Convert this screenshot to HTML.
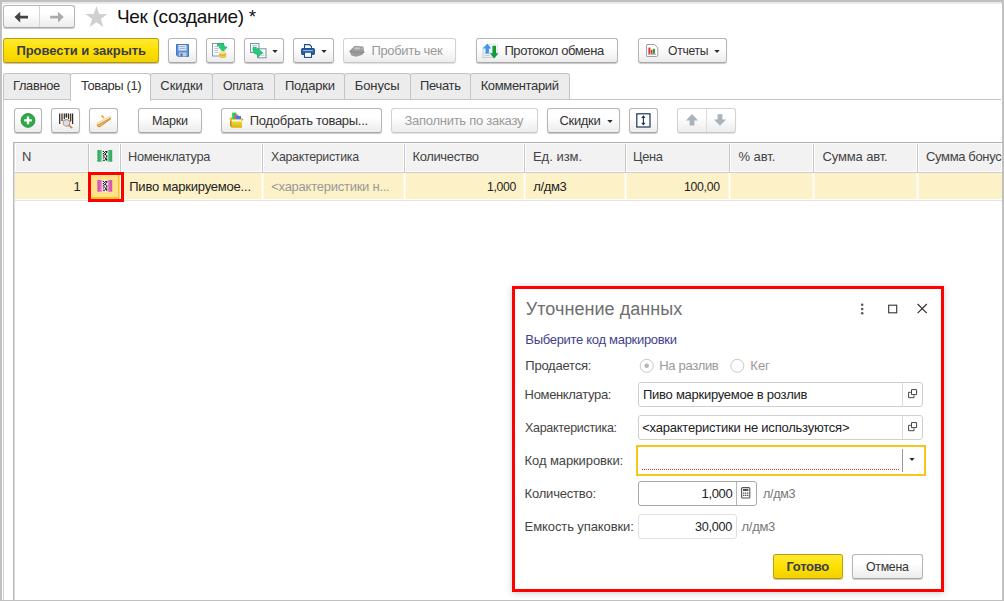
<!DOCTYPE html>
<html lang="ru"><head><meta charset="utf-8"><title>Чек (создание)</title>
<style>
*{box-sizing:border-box;margin:0;padding:0}
html,body{width:1004px;height:601px;overflow:hidden;background:#fff}
body{font-family:"Liberation Sans",sans-serif;font-size:13px;color:#222;position:relative;letter-spacing:-0.35px}
.abs{position:absolute}
svg{position:absolute;overflow:visible;z-index:4}
#frame{position:absolute;left:0;top:0;width:1004px;height:601px;border-style:solid;border-color:#c0c0c0;border-width:2px 2px 1px 2px;z-index:50;pointer-events:none}
.btn{position:absolute;border:1px solid #b6b6b6;border-bottom-color:#a8a8a8;border-radius:3px;background:linear-gradient(#ffffff 35%,#ececec);box-shadow:0 1px 1px rgba(0,0,0,.22);height:25px;line-height:23px;white-space:nowrap;color:#333}
.btn.dis{color:#9a9a9a;border-color:#d2d2d2;border-bottom-color:#c6c6c6;box-shadow:0 1px 1px rgba(0,0,0,.12)}
.ybtn{position:absolute;border:1px solid #c4a200;border-top-color:#b99a00;border-bottom-color:#b59600;border-radius:3px;background:linear-gradient(#ffe935,#fde000 50%,#f2d100);box-shadow:0 1px 1px rgba(0,0,0,.25);height:25px;line-height:23px;font-weight:bold;color:#3a3d4a;white-space:nowrap;text-align:center;letter-spacing:-0.1px}
.tab{position:absolute;top:73px;height:27px;border:1px solid #c4c4c4;border-bottom:none;background:#ececec;border-radius:3px 3px 0 0;line-height:24px;text-align:center;color:#333;white-space:nowrap}
.tab.act{background:#fff;height:28px;z-index:3}
.th{position:absolute;top:144px;height:28px;line-height:25px;background:#f2f2f2;color:#444;white-space:nowrap;overflow:hidden;border-left:1px solid #c6c6c6;padding-left:8px;box-shadow:inset 1px 0 0 #fff,inset -1px 0 0 #fff,inset 0 -1px 0 #fff}
.td{position:absolute;top:173px;height:26px;line-height:28px;background:#fdf1c7;color:#222;white-space:nowrap;overflow:hidden;border-left:1px solid #fff;padding-left:8px;box-shadow:inset 1px 0 0 rgba(255,255,255,.5),-1px 0 0 rgba(255,255,255,.4)}
.lbl{position:absolute;color:#444;white-space:nowrap;line-height:16px;letter-spacing:-0.1px}
.inp{letter-spacing:-0.2px;position:absolute;border:1px solid #cfcfcf;border-radius:3px;background:#fff;height:25px;line-height:23px;white-space:nowrap;overflow:hidden;color:#222}
.dd{position:absolute;width:0;height:0;border-left:2.5px solid transparent;border-right:2.5px solid transparent;border-top:3px solid #333}
</style></head><body>
<div id="frame"></div>
<div class="abs" style="left:2px;top:2px;width:1000px;height:2px;background:linear-gradient(#e6e6e6,#ececec)"></div>

<!-- nav buttons -->
<div class="btn" style="left:3px;top:5px;width:72px;height:23px"></div>
<div class="abs" style="left:39px;top:6px;width:1px;height:21px;background:#d4d4d4"></div>
<svg style="left:13px;top:10px" width="16" height="14" viewBox="0 0 16 14"><path d="M1.500 7.100 L7.200 1.700 V5.700 H15 V8.500 H7.200 V12.500 Z" fill="#444"/></svg>
<svg style="left:49px;top:10px" width="16" height="14" viewBox="0 0 16 14"><path d="M14.700 7.100 L9 1.700 V5.700 H1.200 V8.500 H9 V12.500 Z" fill="#aaaaaa"/></svg>
<svg style="left:0;top:0" width="120" height="32" viewBox="0 0 120 32"><path d="M96.5 6.1 L99.2 13.9 L107.5 14.1 L100.9 19.1 L103.3 27.1 L96.5 22.3 L89.7 27.1 L92.1 19.1 L85.5 14.1 L93.8 13.9 Z" fill="#d0d0d0"/></svg>
<div class="abs" style="left:116px;top:5px;font-size:19px;line-height:24px;color:#111;white-space:nowrap;letter-spacing:0"><span id="t1" style="letter-spacing:-0.31px;position:relative;left:1.0px">Чек (создание) *</span></div>

<!-- main toolbar -->
<div class="ybtn" style="left:3px;top:38px;width:156px;height:25px"><span id="t2" style="letter-spacing:-0.04px;position:relative;left:0.2px">Провести и закрыть</span></div>
<div class="btn" style="left:168px;top:38px;width:29px;height:25px"></div>
<div class="btn" style="left:206px;top:38px;width:29px;height:25px"></div>
<div class="btn" style="left:244px;top:38px;width:40px;height:25px"></div>
<div class="btn" style="left:293px;top:38px;width:41px;height:25px"></div>
<div class="btn dis" style="left:343px;top:38px;width:113px;height:25px;padding-left:28px"><span id="t3" style="letter-spacing:-0.33px;position:relative;left:-0.6px">Пробить чек</span></div>
<div class="btn" style="left:476px;top:38px;width:142px;height:25px;padding-left:28px"><span id="t4" style="letter-spacing:-0.41px;position:relative;left:-0.6px">Протокол обмена</span></div>
<div class="btn" style="left:638px;top:38px;width:89px;height:25px;padding-left:28px"><span id="t5" style="letter-spacing:-0.30px;position:relative;left:0.5px;display:inline-block;transform:scaleX(0.931);transform-origin:0 50%">Отчеты</span></div>
<svg style="left:272px;top:50px" width="6" height="3" viewBox="0 0 6 3"><path d="M0.300 0 H5.700 L3 3.100 Z" fill="#2b2b2b"/></svg>
<svg style="left:321px;top:50px" width="6" height="3" viewBox="0 0 6 3"><path d="M0.300 0 H5.700 L3 3.100 Z" fill="#2b2b2b"/></svg>
<svg style="left:714px;top:50px" width="6" height="3" viewBox="0 0 6 3"><path d="M0.300 0 H5.700 L3 3.100 Z" fill="#2b2b2b"/></svg>

<!-- toolbar icons -->
<svg style="left:176px;top:44px" width="13" height="13" viewBox="0 0 13 13"><path d="M0.5 0.5 H12.5 V12.5 H2 L0.5 11 Z" fill="#5f93dc" stroke="#4376bf"/><rect x="2.5" y="1" width="8" height="5.5" fill="#dfe8f5"/><path d="M3.5 2.5H9.5M3.5 4.5H9.5" stroke="#9db4d6" stroke-width="1"/><rect x="3" y="8.5" width="7.5" height="4" fill="#c5ccd6"/><rect x="4.5" y="9.5" width="2" height="3" fill="#3f6db0"/></svg>
<svg style="left:212px;top:43px" width="16" height="16" viewBox="0 0 16 16"><rect x="0.5" y="0.5" width="11" height="12.5" fill="#fbfcfe" stroke="#8395b0"/><path d="M2.5 3.5H6M2.5 5.5H6.5M2.5 7.5H6M2.5 9.5H6" stroke="#b8c2d2"/><path d="M5.5 0.5 H9.5 Q12.5 0.5 12.5 4 H15 L11 8.8 L7 4 H9.6 Q9.6 3 8.5 3 H5.5 Z" fill="#22d07a" stroke="#17a85e" stroke-width=".7"/><path d="M7.3 9.5 V13.5 Q7.3 15 10.7 15 Q14.1 15 14.1 13.5 V9.5 Z" fill="#e9c84a"/><ellipse cx="10.7" cy="9.5" rx="3.4" ry="1.4" fill="#f7e391"/><path d="M7.3 11.5 Q10.7 13.2 14.1 11.5" stroke="#c9a52d" fill="none" stroke-width=".8"/></svg>
<svg style="left:250px;top:43px" width="17" height="16" viewBox="0 0 17 16"><rect x="0.5" y="0.5" width="8.5" height="9" fill="#fbfcfe" stroke="#7f8fa8"/><path d="M2.5 2.5H7" stroke="#b8c2d2"/><rect x="7.5" y="5.8" width="8.5" height="9" fill="#fbfcfe" stroke="#7f8fa8"/><path d="M11 10.5H14.5M11 12.5H14.5" stroke="#c8d0dc"/><path d="M3 4.2 H6.3 V7.2 L8.2 5.5 L12.6 9.8 L8.2 14 V11.2 Q3 11.2 3 7 Z" fill="#22d07a" stroke="#17a85e" stroke-width=".7"/></svg>
<svg style="left:301px;top:44px" width="14" height="14" viewBox="0 0 14 14"><path d="M3.5 4.5 V0.6 H8.5 L10.5 2.6 V4.5" fill="#fff" stroke="#1f4f8f" stroke-width="1.1"/><rect x="0.6" y="4.6" width="12.8" height="5.8" rx="1.2" fill="#2d62a8" stroke="#1f4f8f" stroke-width="1.1"/><rect x="2.2" y="6" width="9.6" height="1.2" fill="#8fb3e3"/><rect x="3.5" y="8.2" width="7" height="5.2" fill="#fff" stroke="#1f4f8f" stroke-width="1.1"/></svg>
<svg style="left:349px;top:45px" width="16" height="12" viewBox="0 0 16 12"><path d="M0.4 6.2 L5.6 0.8 L14.4 1.4 L15.3 7.4 L13 10 L7 11.7 L2.4 10.6 Z" fill="#9c9c9c"/><path d="M5.8 2.2 L11 2.4 L10.6 4.4 L5 4.2 Z" fill="#c9c9c9"/><path d="M11.8 2.6 L13.6 2.8 L13.6 4.6 L11.6 4.4 Z" fill="#b5b5b5"/><path d="M0.4 6.2 L7.2 7.6 L15.3 7.4" stroke="#868686" fill="none" stroke-width=".8"/></svg>
<svg style="left:482px;top:43px" width="17" height="16" viewBox="0 0 17 16"><rect x="1" y="4" width="10" height="10.5" fill="#eef1f6" stroke="#c5ccd8"/><path d="M2.5 10.5H8M2.5 12.5H8" stroke="#c5ccd8"/><rect x="7" y="1" width="8.5" height="9" fill="#f6f7fa" stroke="#d2d7df" stroke-dasharray="1 1"/><path d="M5.2 0.5 L9.3 5.6 H6.9 V10.5 H3.5 V5.6 H1.1 Z" fill="#3f97ee"/><path d="M12.2 15.6 L16.5 10.2 H14 V2.8 H10.4 V10.2 H7.9 Z" fill="#149a3b"/></svg>
<svg style="left:646px;top:44px" width="13" height="13" viewBox="0 0 13 13"><path d="M1 0.5 H8.5 L11.8 3.8 V11 Q11.8 12.5 10.3 12.5 H1 Q0.6 12.5 0.6 12 V1 Q0.6 0.5 1 0.5 Z" fill="#fff" stroke="#8a95a3" stroke-width=".9"/><rect x="2.4" y="3.6" width="2" height="6.2" fill="#e4322b"/><rect x="4.8" y="5.8" width="1.8" height="4" fill="#e4322b"/><rect x="7" y="4.8" width="2" height="5" fill="#27a33a"/><path d="M2 10.2H10" stroke="#777" stroke-width=".7"/></svg>

<!-- sub toolbar icons -->
<svg style="left:20px;top:113px" width="16" height="16" viewBox="0 0 16 16"><circle cx="8" cy="7.4" r="7" fill="#2fa84a" stroke="#2b9443" stroke-width=".8"/><path d="M8 3.6V11.2M4.2 7.4H11.8" stroke="#fff" stroke-width="2.3"/></svg>
<svg style="left:58px;top:113px" width="17" height="17" viewBox="0 0 17 17"><path d="M1.700 0.400V11M4 0.400V8M6.300 0.400V6M10.600 0.400V6M12.700 0.400V8.500M14.600 0.400V11" stroke="#2b2b2b" stroke-width="1.200"/><path d="M8.400 0.400V4.600" stroke="#2b2b2b" stroke-width="1.700"/><circle cx="8.500" cy="9.900" r="3.300" fill="#cfe0f7" stroke="#c9976b" stroke-width="1.100"/><path d="M11 12.300 L13.600 14.600" stroke="#c08a5c" stroke-width="1.800" stroke-linecap="round"/></svg>
<svg style="left:96px;top:113px" width="16" height="16" viewBox="0 0 16 16"><path d="M5.600 2.300 L8 4.800" stroke="#f0a63c" stroke-width="1.700"/><path d="M1 10 L13.200 3.300 Q15.400 3 15 5.600 L4.200 13.600 Q1.600 14.400 1 12.600 Z" fill="#ecb45c"/><path d="M1.200 10.400 L13.300 3.700 Q14.600 3.600 14.700 4.600 L2.200 11.800 Z" fill="#fdf1d8"/><path d="M1.400 12.200 L14.800 5" stroke="#d18f2e" stroke-width=".9"/><path d="M1.100 12.700 Q1.800 14.200 4.200 13.600 L15 5.700" stroke="#c07d1c" stroke-width=".8" fill="none"/></svg>
<svg style="left:229px;top:112px" width="15" height="17" viewBox="0 0 15 17"><defs><linearGradient id="bx" x1="0" y1="0" x2="0" y2="1"><stop offset="0" stop-color="#f3d936"/><stop offset="1" stop-color="#d9b414"/></linearGradient></defs><rect x="3.200" y="0.600" width="4.200" height="7.400" fill="#10d64a"/><rect x="5.400" y="2.600" width="4" height="5.400" fill="#f5557a"/><rect x="7.200" y="4" width="4.800" height="4" fill="#3b7bf0"/><path d="M0.300 6.800 L2.600 4.800 L3.200 7.400 H12 L12.600 5.600 L14.600 7.600 L12.800 9.200 V15.600 H2.400 L1.200 13.800 V8.200 Z" fill="#e3bd18"/><path d="M2.400 9 H12.800 V15.600 H2.400 Z" fill="url(#bx)"/><path d="M3.200 7.500 H12 L12.800 9.400 H2.400 Z" fill="#fdf7d4"/><path d="M1.200 8.200 L2.400 9 V15.600 L1.200 13.800 Z" fill="#b88a10"/></svg>
<svg style="left:636px;top:113px" width="15" height="15" viewBox="0 0 15 15"><rect x="0.8" y="0.8" width="13.2" height="13.2" fill="#fff" stroke="#1c3557" stroke-width="1.200"/><path d="M7.4 3.4V11.4" stroke="#1c3557" stroke-width="1.1"/><path d="M7.4 2.2 L9.6 5 H5.2 Z M7.4 12.6 L9.6 9.8 H5.2 Z" fill="#1c3557"/></svg>
<svg style="left:685px;top:113px" width="14" height="14" viewBox="0 0 14 14"><path d="M7 1 L13 7.4 H9.4 V12.6 H4.6 V7.4 H1 Z" fill="#aab3b9"/></svg>
<svg style="left:713px;top:113px" width="14" height="14" viewBox="0 0 14 14"><path d="M7 12.8 L13 6.4 H9.4 V1.2 H4.6 V6.4 H1 Z" fill="#aab3b9"/></svg>

<!-- stamps -->
<svg style="left:97px;top:150px;z-index:4" width="16" height="12" viewBox="0 0 16 12"><defs><linearGradient id="g1" x1="0" x2="1"><stop offset="0" stop-color="#2ea45f"/><stop offset=".2" stop-color="#3fb572"/><stop offset=".36" stop-color="#bfe8d1"/><stop offset=".64" stop-color="#bfe8d1"/><stop offset=".8" stop-color="#3fb572"/><stop offset="1" stop-color="#2ea45f"/></linearGradient></defs><path d="M0.8 0 H14.799999999999999 L15.6 0.98 L14.799999999999999 1.97 L15.6 2.95 L14.799999999999999 3.93 L15.6 4.92 L14.799999999999999 5.90 L15.6 6.88 L14.799999999999999 7.87 L15.6 8.85 L14.799999999999999 9.83 L15.6 10.82 L14.799999999999999 11.80 H0.8 L0 10.82 L0.8 9.83 L0 8.85 L0.8 7.87 L0 6.88 L0.8 5.90 L0 4.92 L0.8 3.93 L0 2.95 L0.8 1.97 L0 0.98 L0.8 0.00 Z" fill="url(#g1)"/><rect x="5.600" y="0.400" width="5" height="11" fill="#fff"/><path d="M5.90 0.90h1.1v1.1h-1.1zM8.10 0.90h1.1v1.1h-1.1zM9.20 0.90h1.1v1.1h-1.1zM7.00 2.00h1.1v1.1h-1.1zM9.20 2.00h1.1v1.1h-1.1zM5.90 3.10h1.1v1.1h-1.1zM8.10 3.10h1.1v1.1h-1.1zM7.00 4.20h1.1v1.1h-1.1zM8.10 4.20h1.1v1.1h-1.1zM5.90 5.30h1.1v1.1h-1.1zM9.20 5.30h1.1v1.1h-1.1zM7.00 6.40h1.1v1.1h-1.1zM9.20 6.40h1.1v1.1h-1.1zM5.90 7.50h1.1v1.1h-1.1zM8.10 7.50h1.1v1.1h-1.1zM8.10 8.60h1.1v1.1h-1.1zM9.20 8.60h1.1v1.1h-1.1zM5.90 9.70h1.1v1.1h-1.1zM7.00 9.70h1.1v1.1h-1.1zM9.20 9.70h1.1v1.1h-1.1z" fill="#111"/></svg>
<svg style="left:97px;top:180px;z-index:4" width="16" height="12" viewBox="0 0 16 12"><defs><linearGradient id="g2" x1="0" x2="1"><stop offset="0" stop-color="#d548ae"/><stop offset=".2" stop-color="#dc62ba"/><stop offset=".36" stop-color="#f1bfe3"/><stop offset=".64" stop-color="#f1bfe3"/><stop offset=".8" stop-color="#dc62ba"/><stop offset="1" stop-color="#d548ae"/></linearGradient></defs><path d="M0.8 0 H14.799999999999999 L15.6 0.98 L14.799999999999999 1.97 L15.6 2.95 L14.799999999999999 3.93 L15.6 4.92 L14.799999999999999 5.90 L15.6 6.88 L14.799999999999999 7.87 L15.6 8.85 L14.799999999999999 9.83 L15.6 10.82 L14.799999999999999 11.80 H0.8 L0 10.82 L0.8 9.83 L0 8.85 L0.8 7.87 L0 6.88 L0.8 5.90 L0 4.92 L0.8 3.93 L0 2.95 L0.8 1.97 L0 0.98 L0.8 0.00 Z" fill="url(#g2)"/><rect x="5.600" y="0.400" width="5" height="11" fill="#fff"/><path d="M5.90 0.90h1.1v1.1h-1.1zM8.10 0.90h1.1v1.1h-1.1zM9.20 0.90h1.1v1.1h-1.1zM7.00 2.00h1.1v1.1h-1.1zM9.20 2.00h1.1v1.1h-1.1zM5.90 3.10h1.1v1.1h-1.1zM8.10 3.10h1.1v1.1h-1.1zM7.00 4.20h1.1v1.1h-1.1zM8.10 4.20h1.1v1.1h-1.1zM5.90 5.30h1.1v1.1h-1.1zM9.20 5.30h1.1v1.1h-1.1zM7.00 6.40h1.1v1.1h-1.1zM9.20 6.40h1.1v1.1h-1.1zM5.90 7.50h1.1v1.1h-1.1zM8.10 7.50h1.1v1.1h-1.1zM8.10 8.60h1.1v1.1h-1.1zM9.20 8.60h1.1v1.1h-1.1zM5.90 9.70h1.1v1.1h-1.1zM7.00 9.70h1.1v1.1h-1.1zM9.20 9.70h1.1v1.1h-1.1z" fill="#111"/></svg>

<!-- tabs -->
<div class="abs" style="left:3px;top:99px;width:998px;height:1px;background:#c4c4c4;z-index:2"></div>
<div class="abs" style="left:3px;top:99px;width:1px;height:502px;background:#d0d0d0"></div>
<div class="tab" style="left:3px;width:68px"><span id="t6" style="letter-spacing:-0.30px;position:relative;left:-0.4px;display:inline-block;transform:scaleX(0.984);transform-origin:0 50%">Главное</span></div>
<div class="tab act" style="left:70px;width:81px"><span id="t7" style="letter-spacing:-0.40px;position:relative;left:0.6px">Товары (1)</span></div>
<div class="tab" style="left:150px;width:63px"><span id="t8" style="letter-spacing:-0.10px;position:relative;left:0.0px">Скидки</span></div>
<div class="tab" style="left:212px;width:63px"><span id="t9" style="letter-spacing:-0.30px;position:relative;left:1.4px;display:inline-block;transform:scaleX(0.941);transform-origin:0 50%">Оплата</span></div>
<div class="tab" style="left:274px;width:71px"><span id="t10" style="letter-spacing:-0.20px;position:relative;left:0.4px">Подарки</span></div>
<div class="tab" style="left:344px;width:67px"><span id="t11" style="letter-spacing:-0.04px;position:relative;left:-0.4px">Бонусы</span></div>
<div class="tab" style="left:410px;width:61px"><span id="t12" style="letter-spacing:-0.30px;position:relative;left:-0.5px;display:inline-block;transform:scaleX(0.995);transform-origin:0 50%">Печать</span></div>
<div class="tab" style="left:470px;width:100px"><span id="t13" style="letter-spacing:-0.36px;position:relative;left:-0.4px">Комментарий</span></div>

<!-- sub toolbar -->
<div class="btn" style="left:14px;top:108px;width:28px;height:25px"></div>
<div class="btn" style="left:51px;top:108px;width:29px;height:25px"></div>
<div class="btn" style="left:89px;top:108px;width:29px;height:25px"></div>
<div class="btn" style="left:138px;top:108px;width:64px;height:25px;text-align:center"><span id="t14" style="letter-spacing:-0.30px;position:relative;left:0.2px;display:inline-block;transform:scaleX(0.966);transform-origin:0 50%">Марки</span></div>
<div class="btn" style="left:221px;top:108px;width:161px;height:25px;padding-left:29px"><span id="t15" style="letter-spacing:-0.29px;position:relative;left:-1.2px">Подобрать товары...</span></div>
<div class="btn dis" style="left:391px;top:108px;width:147px;height:25px;text-align:center"><span id="t16" style="letter-spacing:-0.27px;position:relative;left:-0.7px">Заполнить по заказу</span></div>
<div class="btn" style="left:547px;top:108px;width:73px;height:25px;padding-left:13px"><span id="t17" style="letter-spacing:-0.34px;position:relative;left:-1.5px">Скидки</span></div>
<svg style="left:607px;top:120px" width="6" height="3" viewBox="0 0 6 3"><path d="M0.300 0 H5.700 L3 3.100 Z" fill="#2b2b2b"/></svg>
<div class="btn" style="left:629px;top:108px;width:29px;height:25px"></div>
<div class="btn dis" style="left:677px;top:108px;width:59px;height:25px"></div>
<div class="abs" style="left:706px;top:109px;width:1px;height:23px;background:#dcdcdc"></div>

<!-- table -->
<div class="abs" style="left:13px;top:142px;width:990px;height:461px;border-top:1px solid #b2b2b2;border-left:1px solid #bcbcbc;background:#fff"></div>
<div class="abs" style="left:14px;top:143px;width:1px;height:460px;background:#dcdcdc"></div>
<div class="abs" style="left:15px;top:143px;width:987px;height:1px;background:#fbfbfb"></div>
<div class="abs" style="left:16px;top:144px;width:986px;height:27px;background:#f2f2f2"></div>
<div class="abs" style="left:15px;top:172px;width:987px;height:1px;background:#cdcdcd"></div>
<div class="abs" style="left:15px;top:173px;width:987px;height:26px;background:#fdf1c7"></div>
<div class="abs" style="left:15px;top:200px;width:987px;height:1px;background:#e4e4e4"></div>

<div class="th" style="left:15px;width:74px;border-left:none"><span id="t18" style="letter-spacing:-0.35px;position:relative;left:-1.1px">N</span></div>
<div class="th" style="left:88px;width:32px"></div>
<div class="th" style="left:120px;width:142px"><span id="t19" style="letter-spacing:-0.30px;position:relative;left:-0.6px;display:inline-block;transform:scaleX(0.982);transform-origin:0 50%">Номенклатура</span></div>
<div class="th" style="left:262px;width:142px"><span id="t20" style="letter-spacing:-0.30px;position:relative;left:0.1px;display:inline-block;transform:scaleX(0.950);transform-origin:0 50%">Характеристика</span></div>
<div class="th" style="left:404px;width:120px"><span id="t21" style="letter-spacing:-0.35px;position:relative;left:-0.6px">Количество</span></div>
<div class="th" style="left:524px;width:102px"><span id="t22" style="letter-spacing:0.00px;position:relative;left:-0.1px">Ед. изм.</span></div>
<div class="th" style="left:625px;width:105px"><span id="t23" style="letter-spacing:-0.30px;position:relative;left:-0.9px;display:inline-block;transform:scaleX(0.989);transform-origin:0 50%">Цена</span></div>
<div class="th" style="left:729px;width:84px"><span id="t24" style="letter-spacing:-0.10px;position:relative;left:0.6px">% авт.</span></div>
<div class="th" style="left:813px;width:104px"><span id="t25" style="letter-spacing:-0.15px;position:relative;left:0.6px">Сумма авт.</span></div>
<div class="th" style="left:917px;width:85px"><span id="t26">Сумма бонусов</span></div>

<div class="td" style="left:15px;width:74px;border-left:none;box-shadow:none;text-align:right;padding-right:8px"><span id="t27" style="letter-spacing:-0.35px;position:relative;left:-0.5px">1</span></div>
<div class="td" style="left:88px;width:32px;background:#ffe28a;border:2px solid #f6c61e;border-left:1px solid #fff"></div>
<div class="td" style="left:120px;width:142px"><span id="t28" style="letter-spacing:-0.20px;position:relative;left:0.2px">Пиво маркируемое...</span></div>
<div class="td" style="left:262px;width:142px;color:#999"><span id="t29" style="letter-spacing:-0.25px;position:relative;left:0.2px">&lt;характеристики н...</span></div>
<div class="td" style="left:404px;width:120px;text-align:right;padding-right:8px"><span id="t30" style="letter-spacing:-0.30px;position:relative;left:2.3px;display:inline-block;transform:scaleX(0.937);transform-origin:0 50%">1,000</span></div>
<div class="td" style="left:524px;width:102px"><span id="t31" style="letter-spacing:-0.39px;position:relative;left:0.3px">л/дм3</span></div>
<div class="td" style="left:625px;width:105px;text-align:right;padding-right:8px"><span id="t32" style="letter-spacing:-0.30px;position:relative;left:0.3px;display:inline-block;transform:scaleX(0.942);transform-origin:0 50%">100,00</span></div>
<div class="td" style="left:729px;width:84px"></div>
<div class="td" style="left:813px;width:104px"></div>
<div class="td" style="left:917px;width:85px"></div>
<div class="abs" style="left:88px;top:172px;width:36px;height:30px;border:3px solid #ff0000;z-index:5"></div>

<!-- dialog -->
<div class="abs" style="left:512px;top:286px;width:432px;height:306px;background:#fff;box-shadow:0 1px 7px rgba(0,0,0,.2)"></div>
<div class="abs" style="left:512px;top:286px;width:432px;height:306px;border:3px solid #ff0000;z-index:6"></div>
<div class="abs" style="left:525px;top:298px;font-size:18px;line-height:22px;color:#6e6e6e;white-space:nowrap;letter-spacing:0"><span id="t33" style="letter-spacing:0.05px;position:relative;left:0.8px">Уточнение данных</span></div>
<div class="lbl" style="left:525px;top:332px;color:#3f3f8f"><span id="t34" style="letter-spacing:-0.30px;position:relative;left:0.3px">Выберите код маркировки</span></div>
<div class="lbl" style="left:525px;top:358px"><span id="t35" style="letter-spacing:-0.23px;position:relative;left:0.3px">Продается:</span></div>
<div class="lbl" style="left:660px;top:358px;color:#999"><span id="t36" style="letter-spacing:-0.32px;position:relative;left:-0.8px">На разлив</span></div>
<div class="lbl" style="left:750px;top:358px;color:#999"><span id="t37" style="letter-spacing:0.01px;position:relative;left:0.3px">Кег</span></div>
<div class="lbl" style="left:525px;top:387px"><span id="t38" style="letter-spacing:-0.34px;position:relative;left:-0.4px">Номенклатура:</span></div>
<div class="lbl" style="left:525px;top:420px"><span id="t39" style="letter-spacing:-0.30px;position:relative;left:0.4px;display:inline-block;transform:scaleX(0.958);transform-origin:0 50%">Характеристика:</span></div>
<div class="lbl" style="left:525px;top:453px"><span id="t40" style="letter-spacing:-0.10px;position:relative;left:-0.4px">Код маркировки:</span></div>
<div class="lbl" style="left:525px;top:486px"><span id="t41" style="letter-spacing:-0.20px;position:relative;left:-0.4px">Количество:</span></div>
<div class="lbl" style="left:525px;top:519px"><span id="t42" style="letter-spacing:-0.10px;position:relative;left:-0.4px">Емкость упаковки:</span></div>
<div class="inp" style="left:638px;top:382px;width:285px;padding-left:5px"><span id="t43" style="letter-spacing:-0.26px;position:relative;left:-1.0px">Пиво маркируемое в розлив</span></div>
<div class="inp" style="left:638px;top:415px;width:285px;padding-left:4px"><span id="t44" style="letter-spacing:-0.22px;position:relative;left:-0.8px">&lt;характеристики не используются&gt;</span></div>
<div class="inp" style="left:636px;top:445px;width:290px;height:31px;border:2px solid #f7c61c;border-radius:0"></div>
<div class="inp" style="left:638px;top:481px;width:119px;text-align:right;padding-right:24px;border-color:#a8a8a8"><span id="t45" style="letter-spacing:-0.37px;position:relative;left:0.3px">1,000</span></div>
<div class="inp" style="left:638px;top:514px;width:99px;text-align:right;padding-right:3px;border-color:#e0e0e0"><span id="t46" style="letter-spacing:-0.30px;position:relative;left:0.3px;display:inline-block;transform:scaleX(0.975);transform-origin:0 50%">30,000</span></div>
<div class="lbl" style="left:762px;top:486px;color:#777"><span id="t47" style="letter-spacing:-0.30px;position:relative;left:0.5px;display:inline-block;transform:scaleX(0.966);transform-origin:0 50%">л/дм3</span></div>
<div class="lbl" style="left:741px;top:519px;color:#777"><span id="t48" style="letter-spacing:-0.28px;position:relative;left:0.5px">л/дм3</span></div>
<div class="ybtn" style="left:773px;top:554px;width:70px;height:25px"><span id="t49" style="letter-spacing:-0.27px;position:relative;left:-0.3px">Готово</span></div>
<div class="btn" style="left:852px;top:554px;width:71px;height:25px;text-align:center"><span id="t50" style="letter-spacing:-0.30px;position:relative;left:0.8px;display:inline-block;transform:scaleX(0.949);transform-origin:0 50%">Отмена</span></div>
<!-- dialog icons -->
<svg style="left:860px;top:303px;z-index:7" width="5" height="12" viewBox="0 0 5 12"><circle cx="2.2" cy="1.8" r="1.25" fill="#555"/><circle cx="2.2" cy="6" r="1.25" fill="#555"/><circle cx="2.2" cy="10.2" r="1.25" fill="#555"/></svg>
<svg style="left:888px;top:304px;z-index:7" width="10" height="10" viewBox="0 0 10 10"><rect x="0.7" y="1.2" width="8" height="7.600" fill="none" stroke="#333" stroke-width="1.1"/></svg>
<svg style="left:917px;top:303px;z-index:7" width="11" height="11" viewBox="0 0 11 11"><path d="M0.600 1 L9.800 10.200 M9.800 1 L0.600 10.200" stroke="#333" stroke-width="1.200"/></svg>
<svg style="left:639px;top:358px;z-index:7" width="16" height="16" viewBox="0 0 16 16"><circle cx="7.700" cy="7.800" r="6.500" fill="#fff" stroke="#c9c9c9" stroke-width="1"/><circle cx="7.700" cy="7.800" r="2.300" fill="#b5b5b5"/></svg>
<svg style="left:730px;top:358px;z-index:7" width="16" height="16" viewBox="0 0 16 16"><circle cx="7.300" cy="7.800" r="6.500" fill="#fff" stroke="#c9c9c9" stroke-width="1"/></svg>
<div class="abs" style="left:902px;top:383px;width:1px;height:23px;background:#dcdcdc;z-index:7"></div>
<div class="abs" style="left:902px;top:416px;width:1px;height:23px;background:#dcdcdc;z-index:7"></div>
<svg style="left:908px;top:389px;z-index:7" width="10" height="10" viewBox="0 0 10 10"><path d="M3.500 0.600 H8.600 V5.600 H3.500 Z" fill="none" stroke="#444" stroke-width="1"/><path d="M2.800 3.300 H0.600 V8.700 H6 V6.400" fill="none" stroke="#444" stroke-width="1"/></svg>
<svg style="left:908px;top:422px;z-index:7" width="10" height="10" viewBox="0 0 10 10"><path d="M3.500 0.600 H8.600 V5.600 H3.500 Z" fill="none" stroke="#444" stroke-width="1"/><path d="M2.800 3.300 H0.600 V8.700 H6 V6.400" fill="none" stroke="#444" stroke-width="1"/></svg>
<div class="abs" style="left:642px;top:469px;width:257px;height:0;border-top:1px dotted #f03030;z-index:7"></div>
<div class="abs" style="left:902px;top:449px;width:1px;height:23px;background:#999;z-index:7"></div>
<svg style="left:909px;top:458px;z-index:7" width="6" height="3" viewBox="0 0 6 3"><path d="M0.300 0 H5.700 L3 3.100 Z" fill="#2b2b2b"/></svg>
<div class="abs" style="left:736px;top:482px;width:1px;height:23px;background:#b8b8b8;z-index:7"></div>
<svg style="left:741px;top:487px;z-index:7" width="10" height="12" viewBox="0 0 10 12"><rect x="0.600" y="0.600" width="8.200" height="10.400" rx="1" fill="#fff" stroke="#555" stroke-width="1.100"/><rect x="2" y="2" width="5.400" height="2" fill="#555"/><path d="M2 5.600h1.400v1.200H2zM4 5.600h1.400v1.200H4zM6 5.600h1.400v1.200H6zM2 7.800h1.400V9H2zM4 7.800h1.400V9H4zM6 7.800h1.400V9H6z" fill="#555"/></svg>
</body></html>
